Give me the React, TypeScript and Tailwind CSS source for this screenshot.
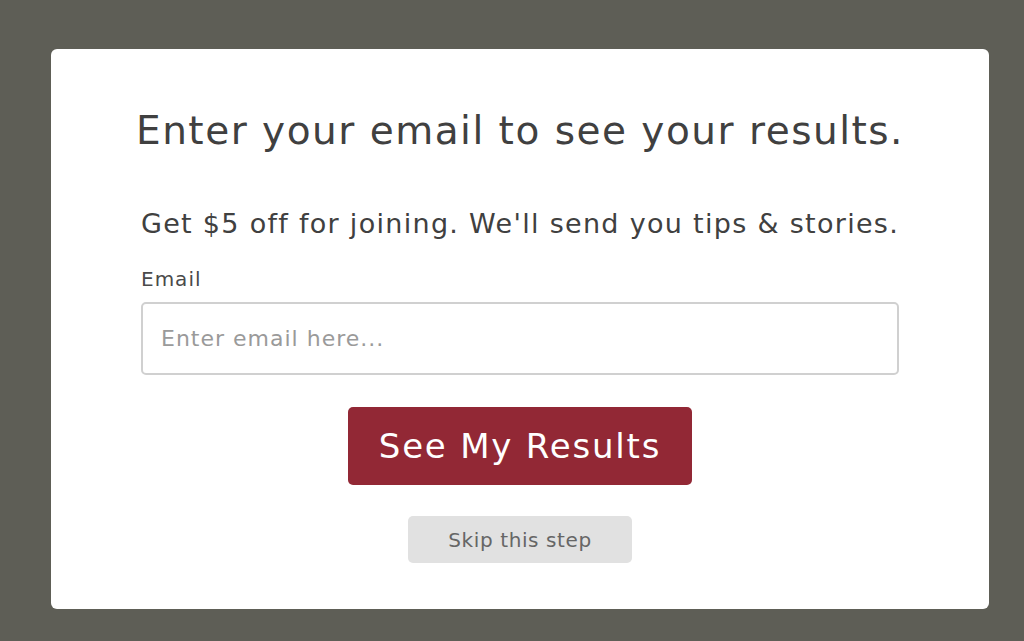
export default function App() {
  return (
    <main
      className="min-h-screen w-full bg-[#5e5e56] pt-[49px] pl-[51px]"
      style={{ fontFamily: '"DejaVu Sans", "Liberation Sans", sans-serif' }}
    >
      <div className="w-[938px] h-[560px] bg-white rounded-[6px] px-[90px] flex flex-col items-center">
        <h1 className="mt-[56px] h-[52px] leading-[52px] text-[39px] text-[#404040] font-normal tracking-[1.5px] whitespace-nowrap">
          Enter your email to see your results.
        </h1>

        <p className="mt-[47px] h-[40px] leading-[40px] text-[27px] text-[#404040] whitespace-nowrap tracking-[1.3px]">
          Get $5 off for joining. We&apos;ll send you tips &amp; stories.
        </p>

        <div className="w-full mt-[21px] flex flex-col">
          <label className="h-[28px] leading-[28px] text-[20px] text-[#4a4a4a] tracking-[1px]">Email</label>
          <input
            className="mt-[9px] w-full h-[73px] border-2 border-[#d0d0d0] rounded-[5px] px-[18px] text-[22px] tracking-[1px] text-[#333] placeholder:text-[#9a9a9a] outline-none"
            placeholder="Enter email here..."
          />
        </div>

        <button className="mt-[32px] w-[344px] h-[78px] bg-[#922835] rounded-[5px] text-white text-[34px] tracking-[1.8px]">
          See My Results
        </button>

        <button className="mt-[31px] w-[224px] h-[47px] bg-[#e1e1e1] rounded-[5px] text-[#666] text-[20px] tracking-[0.6px]">
          Skip this step
        </button>
      </div>
    </main>
  );
}
